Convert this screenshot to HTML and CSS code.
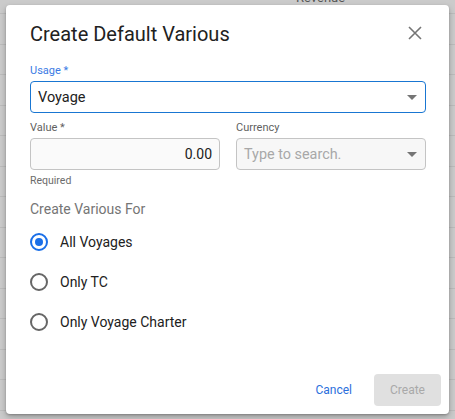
FILE: index.html
```html
<!DOCTYPE html>
<html>
<head>
<meta charset="utf-8">
<link rel="stylesheet" href="styles.css">
</head>
<body>
<div class="page">
  <div class="head-row"><span class="col-title">Revenue</span></div>
  <div class="row"></div><div class="row"></div><div class="row"></div><div class="row"></div>
  <div class="row"></div><div class="row"></div><div class="row"></div><div class="row"></div>
  <div class="row"></div><div class="row"></div><div class="row"></div><div class="row"></div>
  <div class="row"></div>
</div>
<div class="dialog">
  <div class="dialog-header">
    <h2 class="dialog-title">Create Default Various</h2>
    <button class="close-btn" aria-label="Close">
      <svg width="14" height="14" viewBox="0 0 14 14"><path d="M1 1L13 13M13 1L1 13" stroke="#757575" stroke-width="1.6" fill="none"/></svg>
    </button>
  </div>
  <div class="field">
    <label class="label label-active">Usage *</label>
    <div class="select select-active">
      <span class="select-value">Voyage</span>
      <span class="caret"></span>
    </div>
  </div>
  <div class="field-row">
    <div class="field half">
      <label class="label">Value *</label>
      <div class="input"><span class="input-value">0.00</span></div>
      <div class="helper">Required</div>
    </div>
    <div class="field half">
      <label class="label">Currency</label>
      <div class="select select-muted">
        <span class="placeholder">Type to search.</span>
        <span class="caret"></span>
      </div>
    </div>
  </div>
  <div class="group-label">Create Various For</div>
  <div class="radios">
    <div class="radio-row"><span class="radio checked"></span><span class="radio-text">All Voyages</span></div>
    <div class="radio-row"><span class="radio"></span><span class="radio-text">Only TC</span></div>
    <div class="radio-row"><span class="radio"></span><span class="radio-text">Only Voyage Charter</span></div>
  </div>
  <div class="actions">
    <button class="btn-text">Cancel</button>
    <button class="btn-disabled">Create</button>
  </div>
</div>
</body>
</html>
```
FILE: styles.css
```css
* { box-sizing: border-box; }
html, body { margin: 0; padding: 0; }
body {
  width: 455px;
  height: 419px;
  overflow: hidden;
  background: #cbcbcb;
  font-family: Roboto, "Liberation Sans", sans-serif;
  position: relative;
}
.page { display: flex; flex-direction: column; height: 419px; overflow: hidden; }
.head-row {
  flex: none;
  height: 14px;
  border-bottom: 1px solid #bcbcbc;
  position: relative;
}
.col-title {
  position: absolute;
  left: 296px;
  top: -10px;
  font-size: 13px;
  color: #555;
}
.row {
  flex: none;
  height: 30.5px;
  border-bottom: 1px solid #bcbcbc;
}
.dialog {
  position: absolute;
  left: 6px;
  top: 5px;
  width: 443px;
  height: 409px;
  background: #fff;
  border-radius: 4px;
  box-shadow: 0 3px 6px rgba(0,0,0,0.25), 0 1px 2px rgba(0,0,0,0.2);
  padding: 0 23px 0 24px;
  display: flex;
  flex-direction: column;
}
.dialog-header {
  display: flex;
  justify-content: space-between;
  align-items: center;
  height: 56px;
}
.dialog-title {
  margin: 0;
  font-weight: 400;
  font-size: 20px;
  color: #212121;
  padding-top: 1px;
}
.close-btn {
  border: none;
  background: none;
  padding: 0;
  width: 14px;
  height: 14px;
  margin-right: 4px;
  display: flex;
}
.field { display: flex; flex-direction: column; }
.label {
  font-size: 11px;
  color: #5f5f5f;
  height: 17px;
  line-height: 14px;
  padding-top: 3px;
  margin-bottom: 3px;
}
.label-active { color: #3b7be4; }
.select, .input {
  height: 32px;
  border: 1px solid #c4c4c4;
  border-radius: 4px;
  display: flex;
  align-items: center;
  padding: 0 7px;
  font-size: 14px;
}
.select-active {
  border-color: #1976d2;
  color: #212121;
  font-size: 14.5px;
}
.select-value { flex: 1; }
.caret {
  width: 0; height: 0;
  border-left: 5px solid transparent;
  border-right: 5px solid transparent;
  border-top: 5px solid #757575;
  margin-right: 1px;
}
.field-row {
  display: flex;
  gap: 16px;
  margin-top: 5px;
}
.half { flex: 1; }
.input {
  background: #fafafa;
  justify-content: flex-end;
  color: #212121;
}
.select-muted { background: #f7f7f7; }
.placeholder { flex: 1; color: #a8a8a8; font-size: 14.4px; }
.helper {
  font-size: 10.5px;
  color: #6b6b6b;
  margin-top: 4px;
  height: 13px;
  line-height: 13px;
}
.group-label {
  margin-top: 14px;
  font-size: 14px;
  color: #757575;
  height: 17px;
  line-height: 17px;
}
.radios {
  display: flex;
  flex-direction: column;
  margin-top: 4px;
}
.radio-row {
  display: flex;
  align-items: center;
  height: 40px;
}
.radio {
  width: 18px;
  height: 18px;
  border: 2px solid #666;
  border-radius: 50%;
  margin-right: 12px;
  position: relative;
}
.radio.checked { border-color: #1a6fe8; }
.radio.checked::after {
  content: "";
  position: absolute;
  left: 3px; top: 3px;
  width: 8px; height: 8px;
  border-radius: 50%;
  background: #1a6fe8;
}
.radio-text { font-size: 14px; color: #212121; }
.actions {
  margin-top: auto;
  margin-bottom: 8px;
  display: flex;
  justify-content: flex-end;
  align-items: center;
  gap: 22px;
  margin-right: -15px;
}
.btn-text {
  border: none;
  background: none;
  font-family: inherit;
  font-size: 12px;
  color: #2b6fdc;
  padding: 0;
}
.btn-disabled {
  border: none;
  background: #e0e0e0;
  color: #a9a9a9;
  border-radius: 4px;
  font-family: inherit;
  font-size: 12px;
  width: 67px;
  height: 32px;
}
```
